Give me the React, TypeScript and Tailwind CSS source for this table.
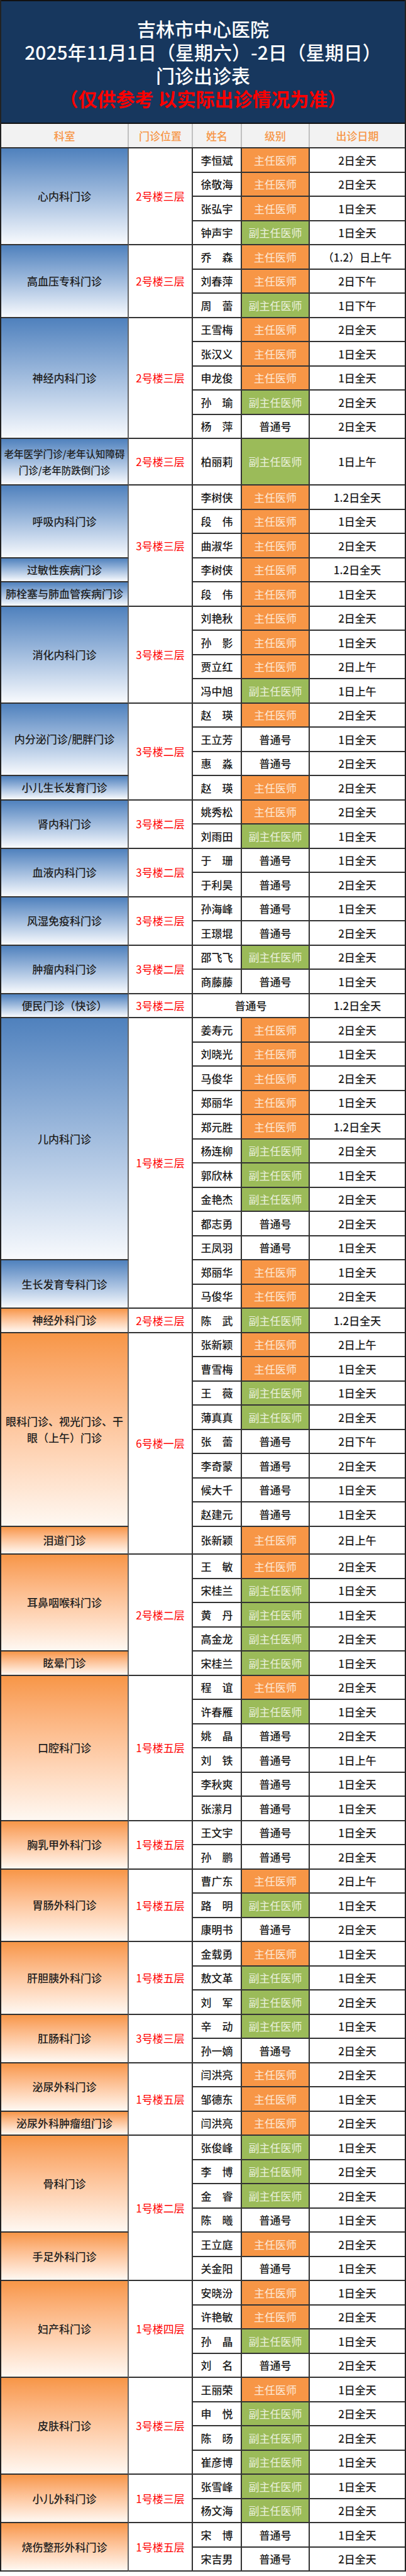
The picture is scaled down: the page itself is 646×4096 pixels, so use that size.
import React from "react";

const FONT = '"Noto Sans CJK SC", "Noto Sans", "Liberation Sans", sans-serif';

type Row = { n: string; l: string; d: string; h?: number; m?: boolean };
type Dept = { name: React.ReactNode; rows: Row[]; small?: boolean };
type Block = { loc: string; c: "b" | "o"; depts: Dept[] };

const DEF_H = 38.5;

const r = (s: string, h?: number): Row => {
  const [n, l, d] = s.split(",");
  return { n, l, d, h };
};

const blocks: Block[] = [
  { loc: "2号楼三层", c: "b", depts: [{ name: "心内科门诊", rows: [r("李恒斌,z,2日全天"), r("徐敬海,z,2日全天"), r("张弘宇,z,1日全天"), r("钟声宇,f,1日全天")] }] },
  { loc: "2号楼三层", c: "b", depts: [{ name: "高血压专科门诊", rows: [r("乔　森,z,（1.2）日上午"), r("刘春萍,z,2日下午"), r("周　蕾,f,1日下午")] }] },
  { loc: "2号楼三层", c: "b", depts: [{ name: "神经内科门诊", rows: [r("王雪梅,z,2日全天"), r("张汉义,z,1日全天"), r("申龙俊,z,1日全天"), r("孙　瑜,f,2日全天"), r("杨　萍,p,2日全天")] }] },
  {
    loc: "2号楼三层",
    c: "b",
    depts: [
      {
        name: (
          <>
            老年医学门诊/老年认知障碍
            <br />
            门诊/老年防跌倒门诊
          </>
        ),
        small: true,
        rows: [r("柏丽莉,f,1日上午", 74)],
      },
    ],
  },
  {
    loc: "3号楼三层",
    c: "b",
    depts: [
      { name: "呼吸内科门诊", rows: [r("李树侠,z,1.2日全天"), r("段　伟,z,1日全天"), r("曲淑华,z,2日全天")] },
      { name: "过敏性疾病门诊", rows: [r("李树侠,z,1.2日全天")] },
      { name: "肺栓塞与肺血管疾病门诊", rows: [r("段　伟,z,1日全天")] },
    ],
  },
  { loc: "3号楼三层", c: "b", depts: [{ name: "消化内科门诊", rows: [r("刘艳秋,z,2日全天"), r("孙　影,z,1日全天"), r("贾立红,z,2日上午"), r("冯中旭,f,1日上午")] }] },
  {
    loc: "3号楼二层",
    c: "b",
    depts: [
      { name: "内分泌门诊/肥胖门诊", rows: [r("赵　瑛,z,2日全天"), r("王立芳,p,1日全天"), r("惠　淼,p,2日全天")] },
      { name: "小儿生长发育门诊", rows: [r("赵　瑛,z,2日全天")] },
    ],
  },
  { loc: "3号楼二层", c: "b", depts: [{ name: "肾内科门诊", rows: [r("姚秀松,z,2日全天"), r("刘雨田,f,1日全天")] }] },
  { loc: "3号楼二层", c: "b", depts: [{ name: "血液内科门诊", rows: [r("于　珊,p,1日全天"), r("于利昊,p,2日全天")] }] },
  { loc: "3号楼三层", c: "b", depts: [{ name: "风湿免疫科门诊", rows: [r("孙海峰,p,1日全天"), r("王璟堒,p,2日全天")] }] },
  { loc: "3号楼二层", c: "b", depts: [{ name: "肿瘤内科门诊", rows: [r("邵飞飞,f,2日全天"), r("商藤藤,p,1日全天")] }] },
  { loc: "3号楼二层", c: "b", depts: [{ name: "便民门诊（快诊）", rows: [{ n: "", l: "p", d: "1.2日全天", m: true }] }] },
  {
    loc: "1号楼三层",
    c: "b",
    depts: [
      {
        name: "儿内科门诊",
        rows: [
          r("姜寿元,z,2日全天"),
          r("刘晓光,z,1日全天"),
          r("马俊华,z,2日全天"),
          r("郑丽华,z,1日全天"),
          r("郑元胜,z,1.2日全天"),
          r("杨连柳,f,2日全天"),
          r("郭欣林,f,1日全天"),
          r("金艳杰,f,2日全天"),
          r("都志勇,p,2日全天"),
          r("王凤羽,p,1日全天"),
        ],
      },
      { name: "生长发育专科门诊", rows: [r("郑丽华,z,1日全天"), r("马俊华,z,2日全天")] },
    ],
  },
  { loc: "2号楼三层", c: "o", depts: [{ name: "神经外科门诊", rows: [r("陈　武,f,1.2日全天")] }] },
  {
    loc: "6号楼一层",
    c: "o",
    depts: [
      {
        name: (
          <>
            眼科门诊、视光门诊、干
            <br />
            眼（上午）门诊
          </>
        ),
        rows: [
          r("张新颖,z,2日上午"),
          r("曹雪梅,z,1日全天"),
          r("王　薇,f,1日全天"),
          r("薄真真,f,2日全天"),
          r("张　蕾,p,2日下午"),
          r("李奇蒙,p,2日全天"),
          r("候大千,p,1日全天"),
          r("赵建元,p,1日全天"),
        ],
      },
      { name: "泪道门诊", rows: [r("张新颖,z,2日上午", 44.5)] },
    ],
  },
  {
    loc: "2号楼二层",
    c: "o",
    depts: [
      { name: "耳鼻咽喉科门诊", rows: [r("王　敏,z,2日全天"), r("宋桂兰,f,1日全天"), r("黄　丹,f,1日全天"), r("高金龙,f,2日全天")] },
      { name: "眩晕门诊", rows: [r("宋桂兰,f,1日全天")] },
    ],
  },
  {
    loc: "1号楼五层",
    c: "o",
    depts: [
      {
        name: "口腔科门诊",
        rows: [r("程　谊,z,2日全天"), r("许春雁,f,1日全天"), r("姚　晶,p,2日全天"), r("刘　铁,p,1日上午"), r("李秋爽,p,1日全天"), r("张潆月,p,1日全天")],
      },
    ],
  },
  { loc: "1号楼五层", c: "o", depts: [{ name: "胸乳甲外科门诊", rows: [r("王文宇,p,1日全天"), r("孙　鹏,p,2日全天")] }] },
  { loc: "1号楼五层", c: "o", depts: [{ name: "胃肠外科门诊", rows: [r("曹广东,z,2日上午"), r("路　明,f,1日全天"), r("康明书,p,2日全天")] }] },
  { loc: "1号楼五层", c: "o", depts: [{ name: "肝胆胰外科门诊", rows: [r("金载勇,z,1日全天"), r("敖文革,f,1日全天"), r("刘　军,f,2日全天")] }] },
  { loc: "3号楼三层", c: "o", depts: [{ name: "肛肠科门诊", rows: [r("辛　动,f,1日全天"), r("孙一嫡,p,2日全天")] }] },
  {
    loc: "1号楼五层",
    c: "o",
    depts: [
      { name: "泌尿外科门诊", rows: [r("闫洪亮,z,2日全天"), r("邹德东,z,1日全天")] },
      { name: "泌尿外科肿瘤组门诊", rows: [r("闫洪亮,z,2日全天")] },
    ],
  },
  {
    loc: "1号楼二层",
    c: "o",
    depts: [
      { name: "骨科门诊", rows: [r("张俊峰,f,1日全天"), r("李　博,f,2日全天"), r("金　睿,f,2日全天"), r("陈　曦,p,1日全天")] },
      { name: "手足外科门诊", rows: [r("王立庭,z,2日全天"), r("关金阳,p,1日全天")] },
    ],
  },
  { loc: "1号楼四层", c: "o", depts: [{ name: "妇产科门诊", rows: [r("安晓汾,z,1日全天"), r("许艳敏,z,2日全天"), r("孙　晶,f,1日全天"), r("刘　名,p,2日全天")] }] },
  { loc: "3号楼三层", c: "o", depts: [{ name: "皮肤科门诊", rows: [r("王丽荣,z,1日全天"), r("申　悦,f,2日全天"), r("陈　旸,f,2日全天"), r("崔彦博,f,1日全天")] }] },
  { loc: "1号楼三层", c: "o", depts: [{ name: "小儿外科门诊", rows: [r("张雪峰,f,1日全天"), r("杨文海,f,2日全天")] }] },
  { loc: "1号楼五层", c: "o", depts: [{ name: "烧伤整形外科门诊", rows: [r("宋　博,p,1日全天"), r("宋吉男,p,2日全天")] }] },
];

const rowH = (x: Row) => x.h ?? DEF_H;

function Level({ l }: { l: string }) {
  if (l === "z")
    return (
      <div className="w-[108px] shrink-0 h-full flex items-center justify-center bg-[#f79646] text-[#fde9d9] border-r-2 border-[#333]">
        主任医师
      </div>
    );
  if (l === "f")
    return (
      <div className="w-[108px] shrink-0 h-full flex items-center justify-center bg-[#9bbb59] text-[#ebf1de] border-r-2 border-[#333]">
        副主任医师
      </div>
    );
  return (
    <div className="w-[108px] shrink-0 h-full flex items-center justify-center bg-white text-[#1a1a1a] font-medium border-r-2 border-[#333]">
      普通号
    </div>
  );
}

function DataRow({ row }: { row: Row }) {
  return (
    <div className="flex border-b-2 border-[#333] bg-white" style={{ height: rowH(row) }}>
      {row.m ? (
        <div className="w-[186px] shrink-0 h-full flex items-center justify-center border-r-2 border-[#333] text-[#1a1a1a] font-medium">
          普通号
        </div>
      ) : (
        <>
          <div className="w-[78px] shrink-0 h-full flex items-center justify-center border-r-2 border-[#333] text-[#1a1a1a] font-medium whitespace-nowrap">
            {row.n}
          </div>
          <Level l={row.l} />
        </>
      )}
      <div className="flex-1 h-full flex items-center justify-center text-[#1a1a1a] font-medium whitespace-nowrap">
        {row.d}
      </div>
    </div>
  );
}

function BlockView({ b }: { b: Block }) {
  const grad =
    b.c === "b"
      ? "bg-linear-to-b from-[#4f81bd] to-[#f8fafd]"
      : "bg-linear-to-b from-[#f79646] to-[#fef8f2]";
  return (
    <div className="flex">
      <div className="w-[203px] shrink-0 flex flex-col">
        {b.depts.map((d, i) => {
          const h = d.rows.reduce((s, x) => s + rowH(x), 0);
          return (
            <div
              key={i}
              className={`${grad} flex items-center justify-center text-center border-b-2 border-r-2 border-b-[#333] border-r-[#666] text-[#1f1f1f] font-medium px-1 ${
                d.small ? "text-[15.5px] leading-[26px]" : "leading-[26px]"
              }`}
              style={{ height: h }}
            >
              <span>{d.name}</span>
            </div>
          );
        })}
      </div>
      <div className="w-[102px] shrink-0 flex items-center justify-center border-r-2 border-b-2 border-[#333] bg-white text-[#ff0000]">
        {b.loc}
      </div>
      <div className="flex-1 flex flex-col">
        {b.depts.flatMap((d, i) => d.rows.map((row, j) => <DataRow key={`${i}-${j}`} row={row} />))}
      </div>
    </div>
  );
}

export default function App() {
  return (
    <div className="w-[646px] bg-white text-[17px]" style={{ fontFamily: FONT }}>
      <div className="border-x-2 border-[#222]">
        <div className="h-[197px] bg-[#17375e] border-y-2 border-[#111] flex flex-col items-center justify-center pt-1 leading-[37px] text-[30px]">
          <div className="text-white font-medium">吉林市中心医院</div>
          <div className="text-white font-medium whitespace-nowrap">2025年11月1日（星期六）-2日（星期日）</div>
          <div className="text-white font-medium">门诊出诊表</div>
          <div className="text-[#ff0000] font-bold whitespace-nowrap">（仅供参考 以实际出诊情况为准）</div>
        </div>
        <div className="h-[39px] flex bg-[#f2f2f2] border-b-2 border-[#333] text-[#f79646] font-medium">
          <div className="w-[203px] shrink-0 flex items-center justify-center border-r-2 border-[#c0c0c0]">科室</div>
          <div className="w-[102px] shrink-0 flex items-center justify-center border-r-2 border-[#c0c0c0]">门诊位置</div>
          <div className="w-[78px] shrink-0 flex items-center justify-center border-r-2 border-[#c0c0c0]">姓名</div>
          <div className="w-[108px] shrink-0 flex items-center justify-center border-r-2 border-[#c0c0c0]">级别</div>
          <div className="flex-1 flex items-center justify-center">出诊日期</div>
        </div>
        {blocks.map((b, i) => (
          <BlockView key={i} b={b} />
        ))}
      </div>
    </div>
  );
}
